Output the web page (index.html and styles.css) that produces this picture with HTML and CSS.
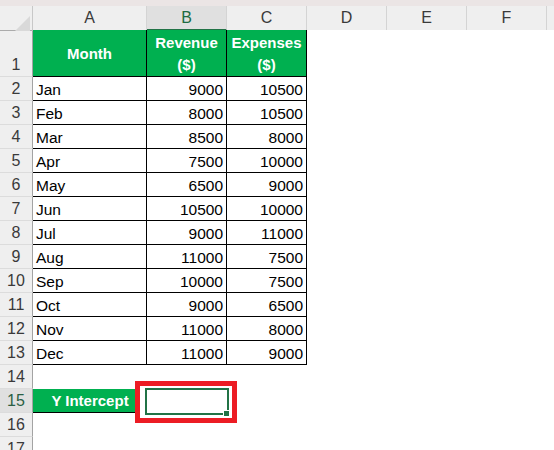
FILE: index.html
```html
<!DOCTYPE html>
<html>
<head>
<meta charset="utf-8">
<link rel="stylesheet" href="styles.css">
</head>
<body>
<div class="sheet">
  <div class="strip"></div>
  <div class="colhead">
    <div class="corner"><span class="tri"></span></div>
    <div class="ch">A</div>
    <div class="ch sel">B</div>
    <div class="ch">C</div>
    <div class="ch">D</div>
    <div class="ch">E</div>
    <div class="ch">F</div>
    <div class="ch last"></div>
  </div>

  <div class="row r1">
    <div class="rh">1</div>
    <div class="c hd">Month</div>
    <div class="c hd">Revenue<br>($)</div>
    <div class="c hd">Expenses<br>($)</div>
    <div class="e"></div>
  </div>
  <div class="row"><div class="rh">2</div><div class="c t">Jan</div><div class="c n">9000</div><div class="c n">10500</div><div class="e"></div></div>
  <div class="row"><div class="rh">3</div><div class="c t">Feb</div><div class="c n">8000</div><div class="c n">10500</div><div class="e"></div></div>
  <div class="row"><div class="rh">4</div><div class="c t">Mar</div><div class="c n">8500</div><div class="c n">8000</div><div class="e"></div></div>
  <div class="row"><div class="rh">5</div><div class="c t">Apr</div><div class="c n">7500</div><div class="c n">10000</div><div class="e"></div></div>
  <div class="row"><div class="rh">6</div><div class="c t">May</div><div class="c n">6500</div><div class="c n">9000</div><div class="e"></div></div>
  <div class="row"><div class="rh">7</div><div class="c t">Jun</div><div class="c n">10500</div><div class="c n">10000</div><div class="e"></div></div>
  <div class="row"><div class="rh">8</div><div class="c t">Jul</div><div class="c n">9000</div><div class="c n">11000</div><div class="e"></div></div>
  <div class="row"><div class="rh">9</div><div class="c t">Aug</div><div class="c n">11000</div><div class="c n">7500</div><div class="e"></div></div>
  <div class="row"><div class="rh">10</div><div class="c t">Sep</div><div class="c n">10000</div><div class="c n">7500</div><div class="e"></div></div>
  <div class="row"><div class="rh">11</div><div class="c t">Oct</div><div class="c n">9000</div><div class="c n">6500</div><div class="e"></div></div>
  <div class="row"><div class="rh">12</div><div class="c t">Nov</div><div class="c n">11000</div><div class="c n">8000</div><div class="e"></div></div>
  <div class="row"><div class="rh">13</div><div class="c t">Dec</div><div class="c n">11000</div><div class="c n">9000</div><div class="e"></div></div>
  <div class="row"><div class="rh">14</div><div class="e wide"></div></div>
  <div class="row"><div class="rh rsel">15</div><div class="yi">Y Intercept</div><div class="e wide2"></div></div>
  <div class="row"><div class="rh">16</div><div class="e wide"></div></div>
  <div class="row"><div class="rh">17</div><div class="e wide"></div></div>

  <div class="mark">
    <div class="selbox"></div>
    <div class="handle"></div>
  </div>
</div>
</body>
</html>
```

FILE: styles.css
```css
* { box-sizing: border-box; }
html, body { margin: 0; padding: 0; background: #ffffff; }
body { width: 554px; height: 450px; overflow: hidden; }

.sheet {
  position: relative;
  width: 554px;
  height: 450px;
  overflow: hidden;
  font-family: "Liberation Sans", Arial, sans-serif;
  color: #000;
}

.strip { height: 6px; background: #ebe5e5; }

.colhead {
  display: grid;
  grid-template-columns: 33px 114px 80px 80px 80px 80px 80px 1fr;
  height: 24px;
  background: #efefef;
}
.corner {
  position: relative;
  border-right: 1px solid #c8c8c8;
  border-bottom: 1px solid #ababab;
}
.tri {
  position: absolute;
  left: 15px;
  top: 10px;
  width: 0;
  height: 0;
  border-left: 15px solid transparent;
  border-bottom: 15px solid #d9d9d9;
}
.ch {
  border-right: 1px solid #d4d4d4;
  border-bottom: 1px solid #ababab;
  text-align: center;
  font-size: 16px;
  line-height: 23px;
  color: #3a3a3a;
}
.ch.sel {
  background: #e0e0e0;
  color: #1d6b42;
  border-bottom: 2px solid #217346;
}
.ch.last { border-right: none; }

.row {
  display: grid;
  grid-template-columns: 33px 114px 80px 80px 1fr;
  height: 24px;
}
.row.r1 { height: 47px; }

.rh {
  display: flex;
  align-items: flex-end;
  justify-content: center;
  background: #efefef;
  border-right: 1px solid #a3a3a3;
  border-bottom: 1px solid #dcdcdc;
  font-size: 16px;
  line-height: 22px;
  color: #3a3a3a;
}
.rh.rsel { background: #e0e0e0; color: #2b5f45; }

.c {
  display: flex;
  align-items: flex-end;
  border-right: 1px solid #000;
  border-bottom: 1px solid #000;
  font-size: 15.5px;
  line-height: 18px;
  padding-bottom: 1px;
}
.c.t { padding-left: 3px; }
.c.n { justify-content: flex-end; padding-right: 3px; }

.c.hd {
  align-items: center;
  justify-content: center;
  text-align: center;
  background: #00b050;
  color: #ffffff;
  font-weight: bold;
  font-size: 15px;
  line-height: 22px;
  padding-top: 2px;
  padding-bottom: 0;
}

.e { background: #ffffff; }
.e.wide { grid-column: 2 / -1; }
.e.wide2 { grid-column: 3 / -1; }

.yi {
  display: flex;
  align-items: center;
  justify-content: center;
  background: #00b050;
  color: #ffffff;
  font-weight: bold;
  font-size: 15px;
  line-height: 22px;
  border-bottom: 1px solid #000;
}

.mark {
  position: absolute;
  left: 135px;
  top: 381px;
  width: 102px;
  height: 42px;
  border: 5px solid #ec1c24;
  background: #ffffff;
}
.selbox {
  position: absolute;
  left: 5px;
  top: 2px;
  width: 84px;
  height: 27px;
  border: 2px solid #217346;
}
.handle {
  position: absolute;
  left: 84px;
  top: 25px;
  width: 5px;
  height: 5px;
  background: #217346;
  box-shadow: 0 0 0 1px #ffffff;
}
```
